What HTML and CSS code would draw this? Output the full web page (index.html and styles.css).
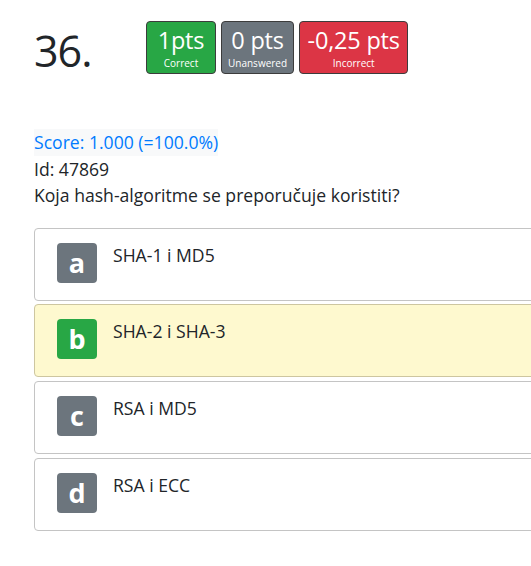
FILE: index.html
```html
<!DOCTYPE html>
<html>
<head>
<meta charset="utf-8">
<link rel="stylesheet" href="styles.css">
</head>
<body>
<div class="page">
  <div class="header">
    <div class="qnum">36.</div>
    <div class="badges">
      <div class="badge badge-green"><div class="pts">1pts</div><div class="lbl">Correct</div></div>
      <div class="badge badge-gray"><div class="pts">0 pts</div><div class="lbl">Unanswered</div></div>
      <div class="badge badge-red"><div class="pts">-0,25 pts</div><div class="lbl">Incorrect</div></div>
    </div>
  </div>
  <div class="info">
    <div><span class="score">Score: 1.000 (=100.0%)</span></div>
    <div>Id: 47869</div>
    <div>Koja hash-algoritme se preporučuje koristiti?</div>
  </div>
  <div class="options">
    <div class="option"><div class="letter">a</div><div class="otext">SHA-1 i MD5</div></div>
    <div class="option option-selected"><div class="letter letter-green">b</div><div class="otext">SHA-2 i SHA-3</div></div>
    <div class="option"><div class="letter">c</div><div class="otext">RSA i MD5</div></div>
    <div class="option"><div class="letter">d</div><div class="otext">RSA i ECC</div></div>
  </div>
</div>
</body>
</html>
```
FILE: styles.css
```css
html, body {
  margin: 0;
  padding: 0;
  background: #fff;
  overflow: hidden;
}
body {
  font-family: "Open Sans", "Noto Sans", sans-serif;
  color: #212529;
  font-size: 17.6px;
  line-height: 26.5px;
}
.page {
  padding-left: 34px;
}
.header {
  display: flex;
  align-items: flex-start;
  padding-top: 21px;
  height: 54px;
}
.qnum {
  font-size: 43px;
  line-height: 44px;
  padding-top: 8px;
  width: 112px;
  letter-spacing: -1px;
}
.badges {
  display: flex;
  gap: 5px;
}
.badge {
  color: #fff;
  border: 1px solid #3c3c3c;
  border-radius: 4px;
  height: 51px;
  padding: 0 6px;
  text-align: center;
  display: flex;
  flex-direction: column;
  align-items: center;
  box-sizing: content-box;
}
.badge-green { background: #28a745; min-width: 56px; }
.badge-gray { background: #6c757d; }
.badge-red { background: #dc3545; padding: 0 7.5px; }
.pts {
  font-size: 23.5px;
  line-height: 32px;
  padding-top: 2px;
  letter-spacing: -0.2px;
}
.lbl {
  font-size: 10px;
  line-height: 14px;
  font-weight: 500;
}
.info {
  margin-top: 54px;
}
.score {
  color: #007bff;
  background: #f8f9fa;
  display: inline-block;
}
.options {
  margin-top: 19px;
  width: 620px;
}
.option {
  display: flex;
  align-items: flex-start;
  height: 71px;
  border: 1px solid #c4c4c4;
  border-radius: 4px;
  margin-bottom: 3.7px;
  background: #fff;
}
.option-selected {
  background: #fef9cf;
  border-color: #cdc6a0;
}
.letter {
  width: 40px;
  height: 40px;
  border-radius: 4px;
  background: #6c757d;
  color: #fff;
  font-weight: 700;
  font-size: 27px;
  line-height: 40px;
  text-align: center;
  margin: 14px 16px 0 22px;
}
.letter-green {
  background: #28a745;
}
.otext {
  padding-top: 13px;
}
```
